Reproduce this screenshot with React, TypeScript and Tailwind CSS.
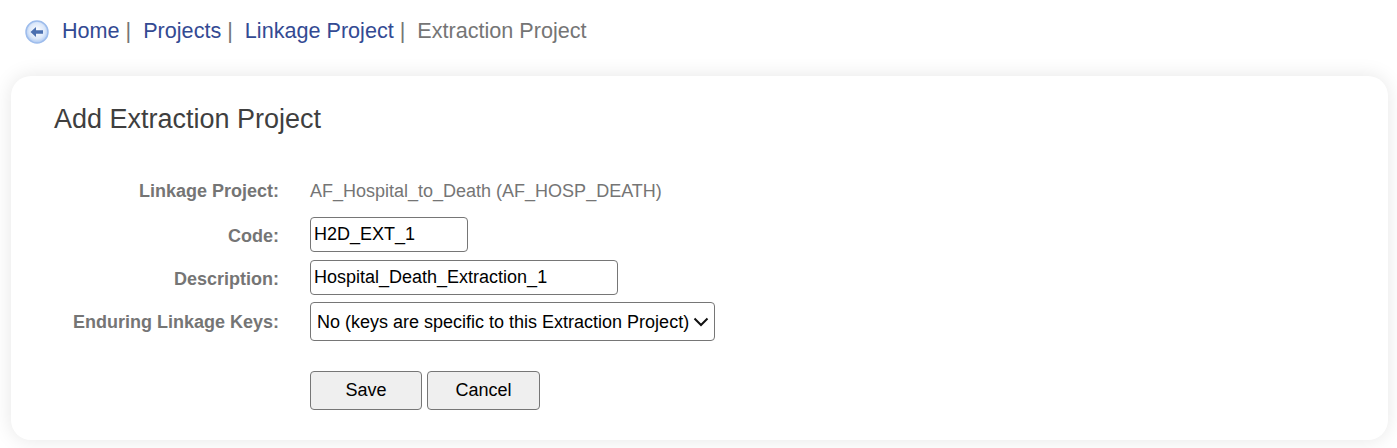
const crumbs = ["Home", "Projects", "Linkage Project"];

function BackIcon() {
  return (
    <svg width="26" height="26" viewBox="0 0 26 26" className="mt-[1px] shrink-0">
      <defs>
        <radialGradient id="back-fill" cx="50%" cy="45%" r="55%">
          <stop offset="0%" stopColor="#ffffff" />
          <stop offset="65%" stopColor="#dce8fa" />
          <stop offset="100%" stopColor="#a9c6f0" />
        </radialGradient>
      </defs>
      <circle cx="13" cy="13" r="11" fill="url(#back-fill)" stroke="#9dbcec" strokeWidth="1.5" />
      <path d="M6.5 13 L12 8 V11.3 H19 V14.7 H12 V18 Z" fill="#4a6fb0" />
    </svg>
  );
}

function Row({ label, children, className, labelClass }: { label: string; children: React.ReactNode; className: string; labelClass?: string }) {
  return (
    <div className={`flex items-center ${className}`}>
      <div className={`w-[225px] shrink-0 text-right text-[18px] font-bold text-[#757575] ${labelClass ?? ""}`}>{label}</div>
      <div className="ml-[31px]">{children}</div>
    </div>
  );
}

export default function App() {
  return (
    <div className="h-[448px] overflow-hidden bg-white font-['Liberation_Sans',Arial,sans-serif]">
      <nav className="flex h-[62px] items-center pl-[24px] text-[21.6px]">
        <BackIcon />
        <div className="ml-[12px] flex items-center">
          {crumbs.map((crumb) => (
            <span key={crumb} className="mr-[12px]">
              <a className="text-[#334a93]">{crumb}</a>
              <span className="ml-[6px] text-[#757575]">|</span>
            </span>
          ))}
          <span className="text-[#757575]">Extraction Project</span>
        </div>
      </nav>

      <main className="ml-[11px] mr-[9px] mt-[14px] h-[364px] rounded-[20px] bg-white pl-[43px] pt-[26px] shadow-[0_0_20px_rgba(0,0,0,0.1)]">
        <h1 className="text-[27px] leading-[34px] text-[#3f3f3f]">Add Extraction Project</h1>

        <div className="mt-[42px]">
          <Row label="Linkage Project:" className="h-[27px]">
            <span className="text-[18px] text-[#757575]">AF_Hospital_to_Death (AF_HOSP_DEATH)</span>
          </Row>
          <Row label="Code:" labelClass="pt-[4px]" className="mt-[11px] h-[36px]">
            <input
              readOnly
              value="H2D_EXT_1"
              className="box-border h-[35px] w-[158px] rounded-[4px] border border-[#767676] bg-white px-[3px] text-[18px] text-black outline-none"
            />
          </Row>
          <Row label="Description:" labelClass="pt-[4px]" className="mt-[8px] h-[35px]">
            <input
              readOnly
              value="Hospital_Death_Extraction_1"
              className="box-border h-[35px] w-[308px] rounded-[4px] border border-[#767676] bg-white px-[3px] text-[18px] text-black outline-none"
            />
          </Row>
          <Row label="Enduring Linkage Keys:" labelClass="pt-[2px]" className="mt-[7px] h-[39px]">
            <div className="box-border flex h-[39px] w-[405px] items-center justify-between rounded-[4px] border border-[#767676] bg-white pl-[6px] pr-[5px] text-[18px] text-black">
              <span className="pt-[1px]">No (keys are specific to this Extraction Project)</span>
              <svg width="16" height="10" viewBox="0 0 16 10" fill="none" stroke="#111" strokeWidth="2">
                <path d="M1.5 1.5 L8 8 L14.5 1.5" />
              </svg>
            </div>
          </Row>
        </div>

        <div className="ml-[256px] mt-[30px] flex gap-[5px]">
          <button className="box-border h-[39px] w-[112px] rounded-[4px] border border-[#767676] bg-[#efefef] text-[18px] text-black">Save</button>
          <button className="box-border h-[39px] w-[113px] rounded-[4px] border border-[#767676] bg-[#efefef] text-[18px] text-black">Cancel</button>
        </div>
      </main>
    </div>
  );
}
